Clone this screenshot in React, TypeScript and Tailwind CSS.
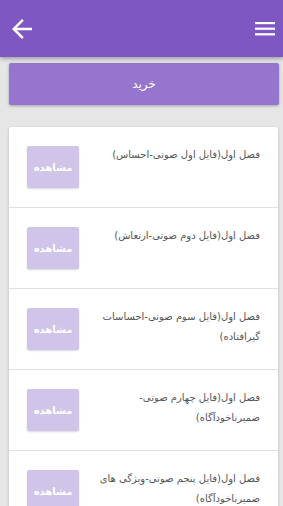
import React from "react";

const items: string[] = [
  "فصل اول(فایل اول صوتی-احساس)",
  "فصل اول(فایل دوم صوتی-ارتعاش)",
  "فصل اول(فایل سوم صوتی-احساسات گیرافتاده)",
  "فصل اول(فایل چهارم صوتی-ضمیرناخودآگاه)",
  "فصل اول(فایل پنجم صوتی-ویژگی های ضمیرناخودآگاه)",
];

export default function App() {
  return (
    <div
      className="w-[283px] h-[506px] overflow-hidden bg-[#e6e6e6] flex flex-col"
      style={{ fontFamily: '"DejaVu Sans", "Noto Sans", sans-serif' }}
    >
      <header className="h-[57px] shrink-0 bg-[#7e57c2] shadow-[0_2px_4px_rgba(0,0,0,0.3)] flex items-center justify-between pl-[7px] pr-[8px] relative z-10">
        <svg width="30" height="30" viewBox="0 0 24 24" fill="white">
          <path d="M20 11H7.83l5.59-5.59L12 4l-8 8 8 8 1.41-1.41L7.83 13H20v-2z" />
        </svg>
        <svg width="20" height="14" viewBox="0 0 20 14" fill="white">
          <rect x="0" y="0" width="20" height="2.2" />
          <rect x="0" y="5.6" width="20" height="2.2" />
          <rect x="0" y="11.2" width="20" height="2.2" />
        </svg>
      </header>
      <div className="px-[9px] pt-[6px] pr-[4px]">
        <button className="w-full h-[42px] rounded-[2px] bg-[#9575cd] text-white text-[12px] shadow-[0_1px_3px_rgba(0,0,0,0.3)] flex items-center justify-center">
          خرید
        </button>
      </div>
      <div className="mt-[22px] ml-[9px] mr-[5px] bg-white rounded-t-[2px] shadow-[0_1px_3px_rgba(0,0,0,0.2)]">
        {items.map((t, i) => (
          <div
            key={i}
            dir="rtl"
            className="flex items-start justify-between pr-[18px] pl-[18px] pt-[19px] pb-[19px] border-b border-[#e0e0e0] h-[81px]"
          >
            <div className="text-[10px] leading-[20px] text-[#555] max-w-[166px] mt-[-1px]">{t}</div>
            <div className="w-[52px] h-[42px] shrink-0 rounded-[2px] bg-[#d1c4e9] shadow-[0_1px_2px_rgba(0,0,0,0.15)] flex items-center justify-center text-white text-[10px] font-semibold">
              مشاهده
            </div>
          </div>
        ))}
      </div>
    </div>
  );
}
